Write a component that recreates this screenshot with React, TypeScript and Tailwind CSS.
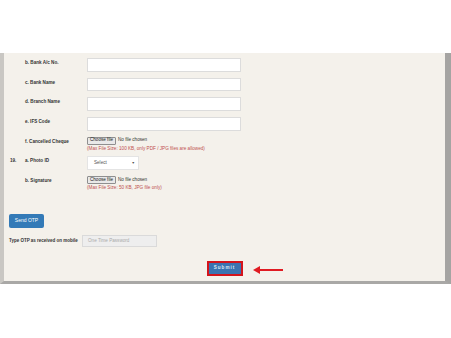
const font = { fontFamily: '"Liberation Sans", Arial, sans-serif' };

function TextRow({ num, label }: { num?: string; label: string }) {
    return (
        <div className="flex h-[19.7px]">
            <div className="w-[21px] pl-[6px] pt-[2px] text-[4.6px] font-bold text-[#333]">{num}</div>
            <div className="w-[62px] pt-[2px] text-[4.6px] font-bold text-[#333]">{label}</div>
            <div className="h-[13.5px] w-[154px] border border-[#dcdcdc] bg-white" />
        </div>
    );
}

function FileRow({ num, label, hint }: { num?: string; label: string; hint: string }) {
    return (
        <div className="flex h-[19.7px]">
            <div className="w-[21px] pl-[6px] pt-[2px] text-[4.6px] font-bold text-[#333]">{num}</div>
            <div className="w-[62px] pt-[2px] text-[4.6px] font-bold text-[#333]">{label}</div>
            <div className="flex flex-col">
                <div className="flex items-center gap-[2px]">
                    <div className="flex h-[8px] w-[29px] items-center justify-center rounded-[1px] border border-[#8f8f8f] bg-[#e9e9e9] text-[4.6px] text-[#222]">Choose file</div>
                    <span className="text-[4.6px] text-[#333]">No file chosen</span>
                </div>
                <div className="mt-[1px] text-[4.65px] text-[#c0504d]">{hint}</div>
            </div>
        </div>
    );
}

export default function App() {
    return (
        <div className="h-[338px] w-[451px] overflow-hidden bg-white" style={font}>
            <div className="mt-[53px] h-[231px] w-[451px] border-b-[3px] border-l-[4px] border-r-[6px] border-b-[#a9a8a6] border-l-[#c9c7c3] border-r-[#a5a4a2] bg-[#f4f1eb]">
                <div className="pt-[5px]">
                    <TextRow label="b. Bank A/c No." />
                    <TextRow label="c. Bank Name" />
                    <TextRow label="d. Branch Name" />
                    <TextRow label="e. IFS Code" />
                    <FileRow label="f. Cancelled Cheque" hint="(Max File Size: 100 KB, only PDF / JPG files are allowed)" />
                    <div className="flex h-[19.7px]">
                        <div className="w-[21px] pl-[6px] pt-[2px] text-[4.6px] font-bold text-[#333]">19.</div>
                        <div className="w-[62px] pt-[2px] text-[4.6px] font-bold text-[#333]">a. Photo ID</div>
                        <div className="flex h-[13.5px] w-[52px] items-center justify-between border border-[#e4e4e4] bg-white pl-[6px] pr-[3px] text-[4.6px] text-[#555]">
                            <span>Select</span>
                            <span className="text-[3.5px]">▼</span>
                        </div>
                    </div>
                    <FileRow label="b. Signature" hint="(Max File Size: 50 KB, JPG file only)" />
                </div>
                <div className="mt-[18px] pl-[5px]">
                    <div className="flex h-[14px] w-[35px] items-center justify-center rounded-[2px] bg-[#337ab7] text-[5px] text-white">Send OTP</div>
                </div>
                <div className="mt-[7px] flex items-center pl-[5px]">
                    <span className="w-[73px] text-[4.5px] font-bold text-[#333]">Type OTP as received on mobile</span>
                    <div className="flex h-[12.5px] w-[75px] items-center border border-[#dadada] bg-[#eeeeee] pl-[5px] text-[4.6px] text-[#aaa]">One Time Password</div>
                </div>
                <div className="relative mt-[14px] flex justify-center">
                    <div className="flex h-[15px] w-[36px] items-center justify-center border-[2px] border-[#d4141c] bg-[#3c73b0] text-[4.6px] font-bold tracking-[1px] text-[#dfe8f3]">Submit</div>
                    <svg className="absolute left-[249px] top-[4px]" width="32" height="10" viewBox="0 0 32 10">
                        <line x1="4" y1="5" x2="30" y2="5" stroke="#e01b22" strokeWidth="2" />
                        <path d="M0 5 L7 1 L7 9 Z" fill="#e01b22" />
                    </svg>
                </div>
            </div>
        </div>
    );
}
